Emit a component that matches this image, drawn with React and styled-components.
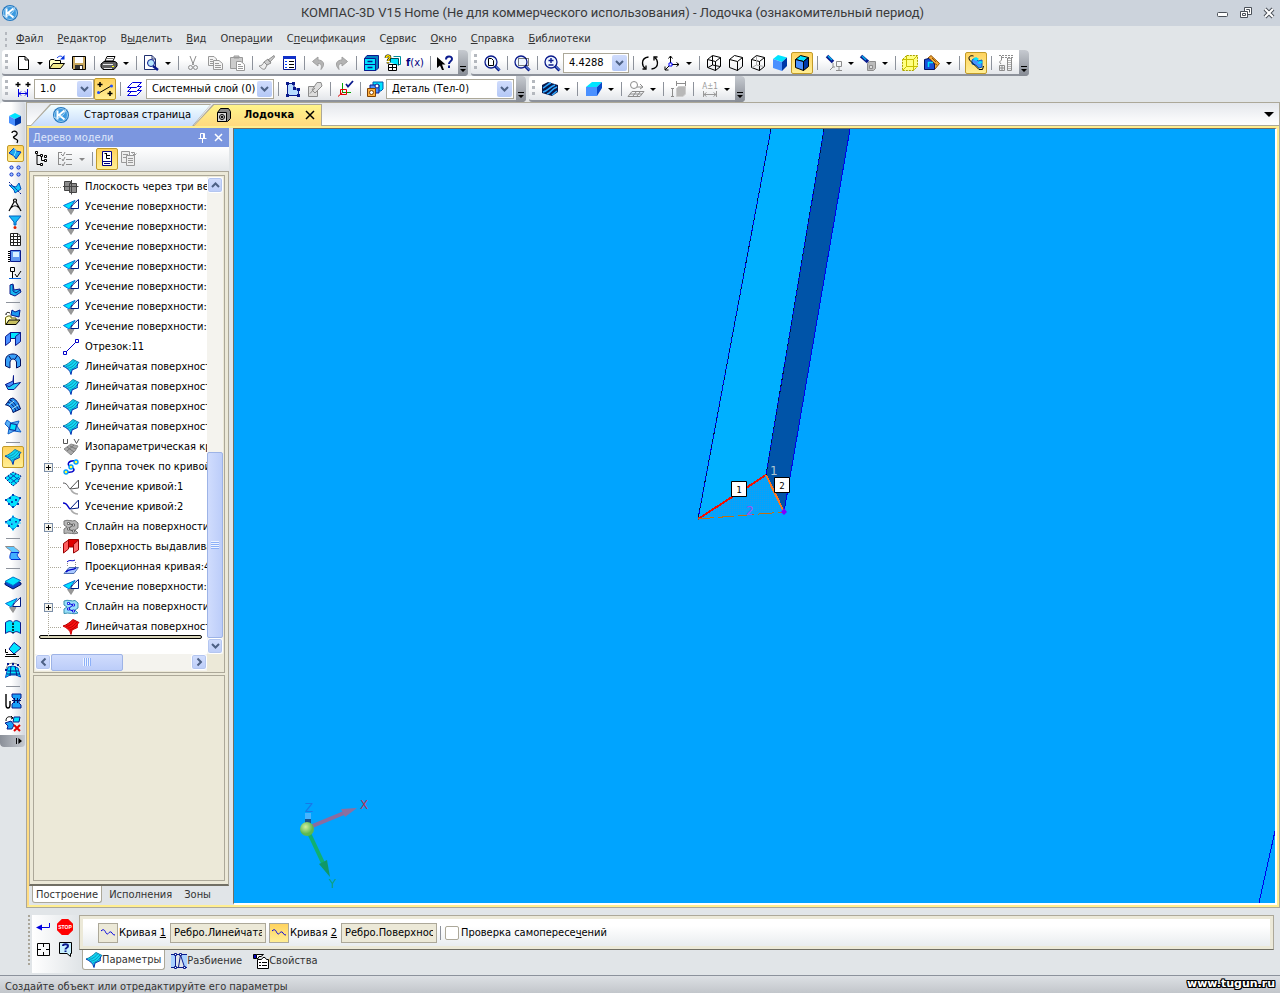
import React from 'react';
import styled, { createGlobalStyle, css } from 'styled-components';

const GlobalStyle = createGlobalStyle`
  * {
    box-sizing: border-box;
  }

  body {
    margin: 0;
    background: #e1e5e8;
    color: #000;
    font-family: "DejaVu Sans Condensed", "DejaVu Sans", sans-serif;
    font-size: 11px;
    line-height: 14px;
  }

  button,
  input,
  select {
    font: inherit;
    color: inherit;
    margin: 0;
    padding: 0;
  }

  button {
    border: none;
    background: none;
  }
`;

/* ---------- icons ---------- */

const Svg = styled.svg`
  display: block;
  flex: none;
  overflow: visible;
`;

const N = '#0a1a8c';
const C = '#00e4ff';
const B = '#4a90ff';
const G = '#8c8c8c';

const cubeWire = (
  <path
    d="M1.5 4.5 9.5 6.5V15.5L1.5 12.5ZM1.5 4.5 6.5 .5 14.5 2.5 9.5 6.5M14.5 2.5V11.5L9.5 15.5"
    fill="none"
    stroke="#000"
  />
);

const magnifier = (
  <g>
    <path d="M11 11 15.5 15.5" stroke={N} strokeWidth="3" />
    <path d="M11.5 11 15.5 15" stroke="#7ab4ff" />
    <circle cx="7" cy="7" r="6" fill="#eef6ff" stroke={N} strokeWidth="1.3" />
  </g>
);

const ruled = (fill, rib, edge) => (
  <g>
    <path d="M0 7C4 6 7 3 10 .5L16 3.5C14 5 14 7 14.5 8.5L9 11 8 15.5C7 11 4 9 0 7Z" fill={fill} />
    <path d="M3 7.5C7 7 10 4 12 1.5M5 9C9 9 11 6 14 3M7 11C9 10 12 9 14 6" fill="none" stroke={rib} strokeWidth=".8" />
    <path d="M0 7C4 6 7 3 10 .5L16 3.5" fill="none" stroke={rib} />
    <path d="M16 3.5C14 5 14 7 14.5 8.5L9 11 8 15.5C7 11 4 9 0 7" fill="none" stroke={edge} />
  </g>
);

const trimmed = (
  <g>
    <path d="M4.5 10.5H11L8 15.5Z" fill="#999" stroke="#777" strokeWidth=".6" />
    <path d="M.5 6.5 12 1.5 6 10Z" fill={C} stroke="#0070d8" />
    <path d="M15.5 .5V9.5H7.5L9.5 6Z" fill="#fff" stroke="#001a80" />
  </g>
);

const splineSurface = (fill, stroke, line) => (
  <g>
    <path d="M1 2C5 0 9 3 12 1.5L15 4V9L12 11 15 14C11 16 6 13 1 14.5V10L4 8 1 6Z" fill={fill} stroke={stroke} />
    <path d="M5 4 10 6 5 10 10 12" fill="none" stroke={line} />
    <path d="M4.5 3.5h2v2h-2zM9.5 5h2v2h-2zM4.5 9h2v2h-2zM9.5 11h2v2h-2z" fill="#fff" stroke={line} strokeWidth=".8" />
  </g>
);

const patch = (
  <g>
    <path d="M0 7 8 1 16 5 13 11 8 15Z" fill={C} stroke={N} strokeDasharray="2 1" />
    <path d="M3 5 11 12M6 3 14 9M3 9 11 3M6 12 14 6" stroke="#0048b8" />
  </g>
);

const netPatch = (
  <g>
    <path d="M1 7 8 2 15 5 12 11 8 15Z" fill={C} stroke="#0a9cd8" />
    <path
      d="M0 6h2v2H0zM7 1h2v2H7zM14 4h2v2h-2zM4 4h2v2H4zM10 6h2v2h-2zM6 8h2v2H6zM7 13h2v2H7zM12 10h2v2h-2zM3 10h2v2H3z"
      fill="#0048b8"
    />
  </g>
);

const icons = {
  newFile: <path d="M3.5 1.5H10L13.5 5V14.5H3.5ZM10 1.5V5H13.5" fill="#fff" stroke="#000" />,
  open: (
    <g>
      <path d="M.5 13.5V5.5L2 4.5H5L6 5.5H11.5V8" fill="#ffffc0" stroke="#000" />
      <path d="M.5 13.5 4 8.5H15.5L11.5 13.5Z" fill="#f0e888" stroke="#000" />
      <path d="M8 3C10 .5 13 .5 14 3" fill="none" stroke="#0030e0" />
      <path d="M11 4.5H15.5V0Z" fill="#0030e0" />
    </g>
  ),
  save: (
    <g>
      <path d="M1.5 1.5H14.5V14.5H2.5L1.5 13.5Z" fill="#c8a860" stroke="#000" />
      <path d="M4 2H12V8H4Z" fill="#fff" />
      <path d="M4 10H12V14H4Z" fill="#333" />
      <path d="M9 11H11V14H9Z" fill="#fff" />
    </g>
  ),
  print: (
    <g>
      <path d="M4 6 6 1.5H14L12 6Z" fill="#fff" stroke="#000" />
      <path d="M6 3.5H12M5 5.5H11" stroke="#777" />
      <path d="M0 9 3 6.5H14L16 8V11L13 14.5H2L0 12Z" fill="#606060" stroke="#000" />
      <path d="M2 9.5H12M3 13.5H11" stroke="#e8e8e8" />
      <path d="M11 11.5H13" stroke="#ff0" />
    </g>
  ),
  preview: (
    <g>
      <path d="M1.5 .5H9L12.5 4V14.5H1.5ZM9 .5V4H12.5" fill="#fff" stroke="#203070" />
      <circle cx="8" cy="8" r="3.5" fill="#b8e8ff" stroke={N} />
      <path d="M10 11 15 15" stroke={N} strokeWidth="2.5" />
    </g>
  ),
  cut: (
    <g stroke={G} fill="none">
      <path d="M5 1 8.5 10M11 1 7.5 10" />
      <circle cx="5.5" cy="12.5" r="2" />
      <circle cx="10.5" cy="12.5" r="2" />
    </g>
  ),
  copy: (
    <g stroke="#999" fill="#f4f4f4">
      <path d="M1.5 1.5H7L9.5 4V10.5H1.5ZM3 4.5H6M3 6.5H7M3 8.5H7" />
      <path d="M6.5 5.5H12L15.5 8.5V14.5H6.5ZM8 8.5H12M8 10.5H14M8 12.5H14" />
    </g>
  ),
  paste: (
    <g stroke="#999" fill="#ccc">
      <path d="M1.5 2.5H13.5V13.5H1.5ZM5 3V1H10V3Z" />
      <path d="M7.5 6.5H12L15.5 9.5V15.5H7.5ZM9 9.5H12M9 11.5H14M9 13.5H14" fill="#fff" />
    </g>
  ),
  brush: (
    <g stroke={G} fill="#ccc">
      <path d="M15 .5 9 5 11 7 15.5 2ZM9 4 12 8 8 10 5 7Z" />
      <path d="M5 7 8 10 6 14C4 15 2 13 0 11C3 11 4 9 5 7Z" fill="#eee" />
    </g>
  ),
  props: (
    <g>
      <path d="M2.5 1.5H14.5V14.5H2.5Z" fill="#fff" stroke={N} />
      <path d="M2 1H15V4H2Z" fill="#1030c8" />
      <path d="M4 6.5H6M4 9.5H6M4 12.5H6" stroke="#0040ff" />
      <path d="M8 6.5H13M8 9.5H13M8 12.5H13" stroke="#000" />
    </g>
  ),
  undo: <path d="M1.5 6.5 7 2V5C12 5 15 9 10 14.5C11 10 10 8.5 7 8.5V11Z" fill="#b4b4b4" stroke="#a0a0a0" />,
  redo: <path d="M14.5 6.5 9 2V5C4 5 1 9 6 14.5C5 10 6 8.5 9 8.5V11Z" fill="#b4b4b4" stroke="#a0a0a0" />,
  cabinet: (
    <g stroke={N}>
      <path d="M1.5 3.5 4 .5H15.5V13L13 15.5H1.5Z" fill="#0080c0" />
      <path d="M1.5 3.5H12.5V9.5H1.5ZM1.5 9.5H12.5V15.5H1.5Z" fill={C} />
      <path d="M4.5 6.5H9.5M4.5 12.5H9.5" strokeWidth="1.6" />
    </g>
  ),
  library: (
    <g>
      <path d="M8.5 1.5H15.5V9.5H12" fill="#fff" stroke="#008c9c" />
      <path d="M5.5 7.5V3.5H13.5V10.5" fill={C} stroke="#00505c" />
      <path d="M3.5 9.5H11.5V15.5H3.5ZM3 12.5H12M7.5 10V15" fill="#fff" stroke="#000" />
      <path d="M1 3C1 0 5 0 5 2.5C5 4 3 4 3 6M3 7V8.5" stroke="#000" strokeWidth="2.6" fill="none" />
      <path d="M1 3C1 0 5 0 5 2.5C5 4 3 4 3 6M3 7V8" stroke="#ffe400" strokeWidth="1.4" fill="none" />
    </g>
  ),
  help: (
    <g>
      <path d="M0 2V13L3 10.5 5 15H7L5 9.5H8.5Z" fill="#000" />
      <path d="M9 4.5C9 .5 15 .5 15 4C15 6.5 12 6 12 9M12 10.5V13" stroke={N} strokeWidth="2" fill="none" />
    </g>
  ),
  zoomPage: (
    <g>
      {magnifier}
      <path d="M4.5 3.5H7.5L9.5 5.5V10.5H4.5Z" fill="#fff" stroke="#000" />
    </g>
  ),
  zoomFrame: (
    <g>
      {magnifier}
      <path d="M4.5 3.5H14.5V10.5H4.5Z" fill="none" stroke="#000" strokeDasharray="1 1" />
    </g>
  ),
  zoomScale: (
    <g>
      {magnifier}
      <path d="M7 3V8M4.5 5.5H9.5M4.5 10H9.5" stroke={N} strokeWidth="1.4" />
    </g>
  ),
  rotate: (
    <g fill="none" stroke="#000" strokeWidth="1.3">
      <path d="M6.5 2C2 2.5 .5 5 .5 8C.5 10 1 12 3.5 13.5M9.5 14C14 13.5 15.5 11 15.5 8C15.5 6 15 4 12.5 2.5" />
      <path d="M.5 14H4V10.5M15.5 2H12V5.5" />
    </g>
  ),
  axes: (
    <g fill="none" stroke="#000">
      <path d="M6.5 9V1M7 9.5H15M6 10 1 15M4.5 3.5 6.5 1 8.5 3.5M12.5 7.5 15 9.5 12.5 11.5M1 11.5V15H4.5" />
      <path d="M5 8H8V11H5Z" fill="#fff" stroke="#00f" />
    </g>
  ),
  wireAll: (
    <g>
      {cubeWire}
      <path d="M6.5 1V10L2 12.5M6.5 10 14 11.5" stroke="#000" fill="none" />
    </g>
  ),
  wire: cubeWire,
  wireThin: (
    <g>
      {cubeWire}
      <path d="M6.5 1V10L2 12.5M6.5 10 14 11.5" stroke="#aaa" fill="none" />
    </g>
  ),
  shaded: (
    <g>
      <path d="M1 4 6 0 15 2.5 10 7Z" fill={C} />
      <path d="M1 4 10 7V16L1 13Z" fill={B} />
      <path d="M10 7 15 2.5V11L10 16Z" fill="#0038a8" />
    </g>
  ),
  shadedEdges: (
    <g stroke="#000">
      <path d="M1.5 4.5 6.5 .5 14.5 2.5 9.5 6.5Z" fill={C} />
      <path d="M1.5 4.5 9.5 6.5V15.5L1.5 12.5Z" fill={B} />
      <path d="M9.5 6.5 14.5 2.5V11.5L9.5 15.5Z" fill="#0038a8" />
    </g>
  ),
  lampAxis: (
    <g>
      <path d="M1 1 7 7" stroke={N} strokeWidth="3.6" />
      <path d="M2 1 6 5" stroke="#00a8e8" strokeWidth="1.6" />
      <path d="M10.5 6.5H15.5V11.5H10.5ZM13 12V15M10 15.5H16M7 8V12L4 15M7 12H9" fill="none" stroke={G} />
    </g>
  ),
  lampCube: (
    <g>
      <path d="M1 1 8 7" stroke={N} strokeWidth="3.6" />
      <path d="M2 1 6 5" stroke="#00a8e8" strokeWidth="1.6" />
      <path d="M7.5 8.5 9.5 6.5H15.5V13.5L13.5 15.5H7.5Z" fill="#bbb" stroke={G} />
      <path d="M9.5 10.5H12.5V13.5H9.5Z" fill="#ddd" stroke={G} />
    </g>
  ),
  yellowBox: (
    <g>
      <path d="M.5 4.5 4.5 .5H15.5V11.5L11.5 15.5H.5Z" fill="#ffff80" stroke="#a8a000" strokeDasharray="2 1" />
      <path d="M.5 4.5H11.5V15.5M11.5 4.5 15.5 .5M4.5 .5V11.5H15.5M4.5 11.5 .5 15.5" fill="none" stroke="#c8c000" />
    </g>
  ),
  section: (
    <g>
      <path d="M4 3 7 .5 15.5 8.5 11 14H4Z" fill="#f0a838" stroke="#905000" />
      <path d="M8 3 12 7M7 6 13 10" stroke="#905000" />
      <path d="M.5 4.5 5 3.5 10.5 9V14.5H.5Z" fill="#1850d8" stroke="#001060" />
      <path d="M4.5 12V7.5H9" stroke={C} fill="none" strokeWidth="1.5" />
    </g>
  ),
  rebuild: (
    <g>
      <path d="M4 5 7 3 10 6 14 5V12L11 13 8 10 4 9Z" fill={B} stroke="#0060c8" />
      <path d="M5 4 8 2 11 4 8 6ZM9 8 12 6 15 7 12 9Z" fill={C} />
      <path d="M5.5 1C2 0 0 2 1.5 5L11 14.5H14.5L15.5 11" fill="none" stroke="#000" />
    </g>
  ),
  frame3d: (
    <g fill="none" stroke={G}>
      <path d="M1 .5H16M4 2.5H16" strokeDasharray="2 1" />
      <path d="M9.5 3V15.5H13.5V3" />
      <path d="M11.5 3V15" strokeWidth="3" strokeDasharray="1 1" stroke="#b4b4b4" />
      <path d="M3.5 1V5L1.5 7L3 9M1.5 10.5H6.5V15.5H1.5ZM4 10V15M1 13H7" />
    </g>
  ),
  step: (
    <g>
      <path d="M3 1V6M13 1V6M.5 3.5H5.5M10.5 3.5H15.5" stroke="#000" strokeWidth="1.4" />
      <path d="M3.5 8V16M12.5 8V16M4 12.5H12M6 10.5 4 12.5 6 14.5M10 10.5 12 12.5 10 14.5" stroke="#0000e0" fill="none" />
    </g>
  ),
  snap: (
    <g>
      <path d="M3 1V6M.5 3.5H5.5M13 10V15M10.5 12.5H15.5" stroke="#000" strokeWidth="1.5" />
      <path d="M2 12 14 5" stroke="#000" />
      <circle cx="1.5" cy="11.5" r="1.5" fill="#2050ff" />
      <circle cx="14.5" cy="5" r="1.5" fill="#2050ff" />
    </g>
  ),
  layers: (
    <g fill="#fff" stroke="#0000e0">
      <path d="M.5 14.5 5.5 9.5H14.5L9.5 14.5Z" />
      <path d="M.5 10.5 5.5 5.5H14.5L9.5 10.5Z" />
      <path d="M.5 6.5 5.5 1.5H14.5L9.5 6.5Z" />
    </g>
  ),
  sketch: (
    <g>
      <path d="M2.5 2.5H8.5L9.5 7.5 13.5 8.5V14.5H2.5Z" fill="#b8dcff" stroke={N} />
      <path d="M1 1h3v3H1zM7 1h3v3H7zM8 6h3v3H8zM12 7h3v3h-3zM12 13h3v3h-3zM1 13h3v3H1z" fill={N} />
    </g>
  ),
  fromFile: (
    <g stroke={G} fill="#ddd">
      <path d="M1.5 5.5H10.5V15.5H1.5Z" />
      <path d="M5 9 10 1.5H14L15 5 8 12ZM3 12.5 8 7" />
    </g>
  ),
  axisCheck: (
    <g fill="none">
      <path d="M5.5 2V11M5 11.5H14" stroke="#00a000" />
      <path d="M6 11 1 15.5" stroke="#e00000" />
      <path d="M3.5 8.5H9.5V13.5H3.5Z" stroke="#e00000" />
      <path d="M9 3 11 5.5 16 0" stroke={N} strokeWidth="1.8" />
    </g>
  ),
  bodies: (
    <g>
      <path d="M6 1H16V8L14 10H6Z" fill={C} stroke="#0058b0" />
      <path d="M3 4H12V12H3Z" fill={B} stroke={N} />
      <circle cx="10" cy="5" r="2" fill="#fff" stroke={N} />
      <path d="M.5 7.5H8.5V15.5H.5Z" fill="#ffb040" stroke="#804000" />
      <circle cx="4.5" cy="11.5" r="2" fill="#fff" stroke="#804000" />
    </g>
  ),
  hatch: (
    <g>
      <path d="M0 4 6 1 16 4V11L10 15 0 12Z" fill="#08184c" />
      <path d="M1 7C4 6 5 3 9 2M1 11C6 10 7 6 13 4M5 13C9 12 9 8 15 6M10 14 15 10" stroke="#2fa8ff" strokeWidth="1.5" fill="none" />
    </g>
  ),
  plane: (
    <g>
      <path d="M0 6 6 1H16L11 6Z" fill={C} />
      <path d="M0 6H11V15H0Z" fill={B} />
      <path d="M11 6 16 1V7L11 15Z" fill="#0848c8" />
    </g>
  ),
  planeGrid: (
    <g fill="none" stroke={G}>
      <circle cx="6" cy="4" r="3.5" />
      <path d="M9 6H14M0 15.5 4 10.5H16L12 15.5ZM2 13H14M5 15 8 11M9 15 12 11" />
      <path d="M12 3 15 6 12 8" />
    </g>
  ),
  dims: (
    <g fill="none" stroke={G}>
      <path d="M6 2.5H15M6.5 0V5M15.5 0V5M1 7.5H4M1 15.5H4M2.5 8V15" />
      <path d="M6.5 7.5 8.5 5.5H15.5V13L13 15.5H6.5Z" fill="#b8b8b8" stroke="#ccc" />
    </g>
  ),
  tolerance: (
    <path
      d="M1.5 0V6M14.5 0V6M2 3.5H14M4.5 1.5 2 3.5 4.5 5.5M11.5 1.5 14 3.5 11.5 5.5"
      fill="none"
      stroke="#999"
    />
  ),
  cubeMini: (
    <g>
      <path d="M2 4 8 1 14 4 8 7Z" fill={C} />
      <path d="M2 4 8 7V14L2 11Z" fill={B} />
      <path d="M8 7 14 4V11L8 14Z" fill="#0038a8" />
    </g>
  ),
  curve: <path d="M5 4C5 1 11 2 10 5C9 8 5 7 7 9C9 11 12 10 10 14" fill="none" stroke="#000" strokeWidth="1.3" />,
  surface: (
    <g>
      <path d="M2 7 7 2 9 5 14 6 9 13 7 10Z" fill="#1ca8f0" stroke="#0038c0" />
      <path d="M7 2 9 5 7 10" fill="none" stroke="#90e8ff" />
    </g>
  ),
  points: (
    <g fill="#a0c8ff" stroke="#1030c8">
      <circle cx="4.5" cy="4.5" r="1.6" />
      <circle cx="11.5" cy="4.5" r="1.6" />
      <circle cx="4.5" cy="11.5" r="1.6" />
      <circle cx="11.5" cy="11.5" r="1.6" />
    </g>
  ),
  auxPlane: (
    <g>
      <path d="M2 5 9 7 12 3 14 9 8 13 7 10Z" fill="#18c8f8" stroke="#0050c0" />
      <path d="M2 2 14 14" stroke={N} strokeDasharray="2 1" />
    </g>
  ),
  compass: (
    <g fill="none" stroke="#000" strokeWidth="1.2">
      <circle cx="8" cy="3.5" r="1.5" />
      <path d="M7 5 2 14M9 5 14 14M4 11C6 8 10 8 12 11" />
    </g>
  ),
  funnel: (
    <g>
      <path d="M2 2H14L9 8V11H7V8Z" fill="#18b8f8" stroke="#0060c0" />
      <circle cx="8" cy="13.5" r="1.5" fill="#e02000" />
    </g>
  ),
  spec: (
    <path
      d="M3.5 2.5H11L13.5 5V14.5H3.5ZM3.5 5.5H13.5M3.5 8.5H13.5M3.5 11.5H13.5M6.5 2.5V14.5M10.5 2.5V14.5"
      fill="#fff"
      stroke="#222"
    />
  ),
  report: (
    <g>
      <path d="M3.5 2.5H13.5V13.5H3.5Z" fill="#6098f0" stroke={N} />
      <path d="M6 4H12V9H6Z" fill="#d8f0ff" />
      <path d="M2 3V14" stroke="#000" strokeDasharray="1 1" strokeWidth="2" />
    </g>
  ),
  annot: (
    <g fill="none">
      <path d="M3.5 2.5H7.5V6.5H3.5ZM5.5 7V13" stroke="#000" />
      <path d="M2 13.5H14" stroke="#0060e0" />
      <path d="M8 9 10 12 14 6" stroke="#000" />
    </g>
  ),
  sheet: (
    <g>
      <path d="M3 3 6 2 7 8 13 7 14 10 8 14 3 12Z" fill="#18b8f0" stroke={N} />
      <path d="M6 3V9L9 11 13 8" fill="none" stroke={N} />
    </g>
  ),
  importSurf: (
    <g>
      <path d="M.5 15.5V8.5L3 7H6V9H11V15.5Z" fill="#ffffc0" stroke="#605800" />
      <path d="M1 15.5 4 11H15L11 15.5Z" fill="#c8c060" stroke="#000" />
      <path d="M6 6 7 1 10 3 15 1 14 8 10 7Z" fill="#1c98f0" stroke="#001a90" />
      <path d="M1 6C1 3 3 3 5 4" stroke="#000" fill="none" />
    </g>
  ),
  extrude: (
    <g stroke={N}>
      <path d="M5.5 1.5H15.5V7.5H5.5Z" fill={C} />
      <path d="M.5 5.5 5.5 1.5V10.5L.5 14.5Z" fill={B} />
      <path d="M10.5 5.5 15.5 1.5V10.5L10.5 14.5Z" fill={B} />
    </g>
  ),
  revolve: (
    <g stroke="#001060">
      <path d="M.5 13V7C1 2 5 1 8 1C12 1 15 4 15.5 7V13L11.5 15V9C10 5 6 5 5 9V15Z" fill="#38a0f8" />
      <path d="M4 3 6 6M12 3 10 6" />
    </g>
  ),
  kinematic: (
    <g>
      <path d="M.5 9.5 8 9 15.5 7.5 9 14.5H3Z" fill="#28d0f8" stroke={N} />
      <path d="M8.5 .5V9L4 12 .5 9.5 8 6Z" fill={B} stroke={N} />
    </g>
  ),
  loft: (
    <g>
      <path d="M.5 8 5 2 8 1C12 3 14 7 15.5 12L8 15.5C7 11 4 8 .5 8Z" fill="#2890f0" stroke="#001060" />
      <path d="M3 5C7 7 9 9 11 14M5 3C10 6 11 9 14 13" stroke="#001060" fill="none" />
      <path d="M4 8 9 4M7 12 13 8" stroke="#b0f0ff" fill="none" />
    </g>
  ),
  patchFill: (
    <g>
      <path d="M2 1 6 4 14 2 12 7 16 13 9 12 3 15 4 9 0 5Z" fill="#58b0f8" stroke="#1060c8" />
      <path d="M5.5 4.5 11.5 5.5 10.5 11.5 4.5 10.5Z" fill={C} stroke={N} />
    </g>
  ),
  ruled: ruled('#12d8f4', '#1080a8', '#0030b0'),
  ruledRed: ruled('#f81010', '#b00000', '#d00000'),
  patch,
  netPatch,
  netPatch2: (
    <g>
      {netPatch}
      <path d="M8 0V16M0 8H16" stroke="#20c8ff" />
    </g>
  ),
  joint: (
    <g>
      <path d="M.5 1.5H9C10 4 15 5 14 7.5H6C7 5 2 4 .5 1.5Z" fill="#60c8ff" stroke={G} />
      <path d="M6 7.5H14C10 10 14 13 15.5 14.5H6C4 13 5 10 6 7.5Z" fill="#40b0ff" stroke="#0030d0" />
    </g>
  ),
  offset: (
    <g>
      <path d="M0 8 8 4 16 8V9.5L8 14 0 9.5Z" fill="#0848d0" stroke="#001060" />
      <path d="M0 6.5 8 2 15.5 5.5 8 10.5Z" fill={C} stroke="#0078c8" />
    </g>
  ),
  trimmed,
  split: (
    <g>
      <path d="M.5 3.5C4 1 6 1 8 3.5C10 1 12 1 15.5 3.5V14.5C12 12 10 12 8 14.5C6 12 4 12 .5 14.5Z" fill={C} stroke={N} />
      <path d="M8 4V14" stroke="#000" strokeDasharray="2 1" strokeWidth="1.5" />
    </g>
  ),
  extend: (
    <g>
      <path d="M4 8 9 1.5 16 7 9 13Z" fill={C} stroke={N} />
      <path d="M.5 8V11.5H3M1 13.5H11M0 15.5H14" stroke="#000" fill="none" />
    </g>
  ),
  net: (
    <g>
      <path d="M3 4 8 3 13 5 15.5 14 11 12 5 12 .5 14.5Z" fill={C} stroke="#0048c0" />
      <path d="M3 8H14M2 11H15M6 3 5 13M10 3 12 13" stroke={N} fill="none" />
      <path d="M1 6 3 1 8 0 12 1 16 5" stroke={G} fill="none" />
      <path d="M2 0h2v2H2zM7 0h2v2H7zM12 1h2v2h-2zM0 6h2v2H0z" fill={N} />
    </g>
  ),
  sew: (
    <g>
      <path d="M1 1V12C1 16 5 16 5 12V8" fill="none" stroke="#000" strokeWidth="1.4" />
      <path d="M7 1H16V5L14 7V10L16 12V15H7V11L9 9V6L7 4Z" fill="#18a0f8" stroke={N} />
      <path d="M7 7.5H16M9.5 5V10M12.5 5V10" stroke="#001060" />
    </g>
  ),
  removeFace: (
    <g>
      <path d="M9 2H15L14 7H8Z" fill={C} stroke={N} />
      <path d="M0 8 6 6 9 10 7 14H2L3 11Z" fill="#18a0f8" stroke={N} />
      <path d="M1 6C1 1 5 1 8 3M6 1 8 3 6 4" fill="none" stroke="#000" />
      <path d="M9 10 15 16M15 10 9 16" stroke="#e00000" strokeWidth="2" />
    </g>
  ),
  planeThree: (
    <g stroke="#444">
      <path d="M1.5 2.5H7.5V11.5H1.5Z" fill={G} />
      <path d="M6.5 4.5H13.5V13.5H6.5Z" fill={G} />
      <path d="M0 7.5H15.5M8.5 1V15.5" />
    </g>
  ),
  segment: (
    <g>
      <path d="M2 14 14 2" stroke="#0000c8" />
      <path d="M.5 12.5H3.5V15.5H.5ZM12.5 .5H15.5V3.5H12.5Z" fill="#fff" stroke="#0000c8" />
    </g>
  ),
  iso: (
    <g>
      <path d="M1 10 8 5 15 7 12 12 8 16Z" fill="#a8a8a8" stroke={G} />
      <path d="M4 8 11 13M7 7 13 10M4 12 11 6" stroke="#777" />
      <path d="M.5 0V4.5H4.5V0M11 0 13.5 4.5 16 0" fill="none" stroke="#555" />
    </g>
  ),
  pointGroup: (
    <g>
      <path d="M13 2C5 1 3 6 8 8C13 10 12 14 3 13" fill="none" stroke="#0000c8" strokeWidth="1.5" />
      <g fill="#ffff40" stroke="#00a0ff" strokeWidth="1.4">
        <circle cx="13" cy="3" r="2" />
        <circle cx="8" cy="8" r="2" />
        <circle cx="3" cy="13" r="2" />
      </g>
    </g>
  ),
  trimCurveGrey: (
    <g fill="none">
      <path d="M0 4C5 4 5 9 7 10" stroke="#555" />
      <path d="M7 10 15.5 1V9L7 10" stroke="#555" />
      <path d="M8 11C10 14 12 15 15 15" stroke="#aaa" strokeWidth="1.5" />
    </g>
  ),
  trimCurve: (
    <g fill="none">
      <path d="M0 4C5 4 5 9 7 10" stroke="#0000c8" strokeWidth="1.4" />
      <path d="M7 10 15.5 1V9L7 10" stroke="#001a80" />
      <path d="M8 11C10 14 12 15 15 15" stroke="#aaa" strokeWidth="1.5" />
    </g>
  ),
  splineGrey: splineSurface('#b8b8b8', '#777', '#555'),
  spline: splineSurface('#98e0f8', '#3890b0', '#0000e0'),
  extrudeRed: (
    <g stroke="#900">
      <path d="M5.5 .5H15.5L11 8H5.5Z" fill="#e00000" />
      <path d="M.5 4.5 5.5 1V10L.5 14Z" fill="#ff6060" />
      <path d="M10.5 5.5 15.5 1V11L10.5 14Z" fill="#ff7070" />
    </g>
  ),
  projection: (
    <g>
      <path d="M1 14.5 6 8.5H15.5L11 14.5Z" fill="#a8c8ff" stroke="#5070b0" />
      <path d="M3 13C6 9 9 12 13 9" fill="none" stroke="#0000c8" strokeWidth="1.3" />
      <path d="M4 3C7 0 9 3 12 1" fill="none" stroke="#0000c8" />
      <path d="M4.5 4V8M12.5 3V8" stroke={G} strokeDasharray="1 1" />
    </g>
  ),
  treeView: (
    <g fill="none" stroke="#000">
      <path d="M2 3V13.5H6M2 4.5H6M6.5 6V9.5H9" />
      <path d="M.5 .5h2v2H.5zM5.5 3.5h2v2h-2zM9.5 8.5h2v2h-2zM5.5 12.5h2v2h-2zM9.5 4.5h2v2h-2z" fill="#fff" />
    </g>
  ),
  checkList: (
    <g fill="none" stroke={G}>
      <path d="M1.5 1V14M2 1.5H5M2 7.5H4M2 13.5H4M9 3.5H15M9 8.5H15M9 13.5H15" />
      <path d="M4 3 6 5 8 1M5 8 6 10 8 6M5 13 6 15 8 11" />
    </g>
  ),
  docTree: (
    <g>
      <path d="M3.5 .5H12.5V14.5H3.5Z" fill="#fff" stroke="#000080" />
      <path d="M4 10.5H12M5 12.5H11" stroke="#000080" />
      <path d="M5.5 2.5H8M7.5 2V7.5H11M8 4.5H11" stroke="#000" fill="none" />
    </g>
  ),
  docCopy: (
    <g fill="#eee" stroke="#999">
      <path d="M.5 .5H8.5V11.5H.5Z" />
      <path d="M5.5 4.5H13.5V14.5H5.5ZM7 7.5H12M7 9.5H12M7 11.5H12M2 3.5H7M2 6.5H5" />
      <path d="M10 1.5H13.5V4M11.5 2.5 13.5 4.5 15.5 2.5" fill="none" />
    </g>
  ),
  doc: (
    <g stroke="#000">
      <path d="M1.5 5.5 4.5 1.5H12.5L14.5 4.5V11.5L11.5 14.5H1.5Z" fill="#888" />
      <path d="M1.5 5.5H10.5V14.5H1.5Z" fill="#d8d8d8" />
      <circle cx="6" cy="10" r="2.5" fill="#fff" />
      <circle cx="6" cy="10" r="1" fill="#000" />
    </g>
  ),
  enter: (
    <g>
      <path d="M14.5 4V8.5H6" fill="none" stroke="#0000e0" />
      <path d="M1 8.5 7 5.5V11.5Z" fill="#0000e0" />
    </g>
  ),
  target: (
    <path
      d="M2.5 2.5H14.5V14.5H2.5ZM8.5 3V6M8.5 11V14M3 8.5H6M11 8.5H14"
      fill="none"
      stroke="#000"
    />
  ),
  ask: (
    <g>
      <path d="M2.5 1.5H14.5V12.5H13.5V15.5L10 12.5H2.5Z" fill="#c8f0ff" stroke="#000" />
      <path d="M6 5C6 2.5 11 2.5 11 5C11 7 8.5 6.5 8.5 8.5M8.5 9.5V11" stroke={N} strokeWidth="2" fill="none" />
    </g>
  ),
  wave: <path d="M1 6C4 3 5 6 6 8C8 11 9 6 11 7C13 8 12 10 15 10" fill="none" stroke="#0000e0" />,
  division: (
    <g stroke={N}>
      <path d="M0 1.5H4.5V14.5H0ZM9.5 1.5H16V14.5H13.5Z" fill="#a8d0ff" stroke="none" />
      <path d="M0 1.5H16M0 14.5H16M4.5 2V14M7.5 14 9.5 2 13.5 14" fill="none" />
      <path d="M3.5 .5h2v2h-2zM8.5 .5h2v2h-2zM3.5 13.5h2v2h-2zM12.5 13.5h2v2h-2z" fill="#fff" />
    </g>
  ),
  sheetHand: (
    <g stroke="#000">
      <path d="M4.5 6.5H8.5L10 4.5H12L13.5 6.5H15.5V15.5H4.5ZM6 9.5H8M9 9.5H14M6 12.5H8M9 12.5H14" fill="#fff" />
      <path d="M.5 1.5H3.5V5.5H.5Z" fill="#0000c0" />
      <path d="M3.5 1.5H10.5L8 3.5H6L5 5.5H3.5Z" fill="#fff" />
    </g>
  ),
};

function Icon({ name, height = 16 }) {
  return (
    <Svg width="16" height={height} viewBox={`0 0 16 ${height}`} aria-hidden="true">
      {icons[name]}
    </Svg>
  );
}

function Logo() {
  return (
    <Svg width="16" height="16" viewBox="0 0 16 16" aria-hidden="true">
      <circle cx="8" cy="8" r="8" fill="#2478c0" />
      <circle cx="8" cy="8" r="6.5" fill="#3c9ae0" stroke="#a8d4f4" strokeWidth=".8" />
      <path d="M4.5 3.5V12.5M11.5 3.5 6 8 11.5 12.5" fill="none" stroke="#fff" strokeWidth="2" />
      <path d="M1 10C4 13 12 9 13 2" fill="none" stroke="#d0e8fa" strokeWidth=".8" />
    </Svg>
  );
}

/* ---------- window chrome ---------- */

const Window = styled.div`
  display: flex;
  flex-direction: column;
  height: 100vh;
  overflow: hidden;
`;

const TitleBar = styled.header`
  display: flex;
  align-items: center;
  height: 26px;
  padding: 0 5px 0 2px;
  background: #ccd3dc;
`;

const Title = styled.h1`
  flex: 1;
  margin: 0;
  padding-right: 10px;
  color: #3a3a3a;
  font: 13px/18px Roboto, "Open Sans", sans-serif;
  text-align: center;
  white-space: nowrap;
`;

const WindowButtons = styled.div`
  display: flex;
  gap: 11px;
`;

const Grip = styled.span`
  flex: none;
  width: 3px;
  height: 18px;
  background: repeating-linear-gradient(to bottom, #b4b8be 0 3px, transparent 3px 6px);
`;

const MenuBar = styled.nav`
  display: flex;
  align-items: center;
  gap: 14px;
  height: 24px;
  padding-top: 2px;
  padding-left: 5px;

  ${Grip} {
    width: 2px;
    height: 15px;
    margin-right: -5px;
  }
`;

const MenuItem = styled.button`
  color: #333;
  white-space: nowrap;
`;

const ToolRow = styled.div`
  display: flex;
  gap: 3px;
  height: 26px;
  padding: 0 2px;
`;

const ToolBar = styled.div`
  display: flex;
  align-items: center;
  height: 26px;
  padding-top: 2px;
  border-bottom: 2px solid #8d929b;
  border-radius: 3px 4px 4px 3px;
  background: linear-gradient(#fff 40%, #e3e6ea);

  ${Grip} {
    margin: 0 4px 0 3px;
  }
`;

const ToolButton = styled.button`
  display: flex;
  flex: none;
  flex-direction: column;
  align-items: center;
  justify-content: center;
  width: ${(p) => p.$size || 22}px;
  height: ${(p) => p.$size || 22}px;
  ${(p) =>
    p.$active &&
    css`
      border: 1px solid #c29b29;
      border-radius: 2px;
      background: linear-gradient(#ffd35e, #ffee94);
    `}
`;

const Caret = styled.button`
  display: flex;
  flex: none;
  align-items: center;
  justify-content: center;
  width: 12px;
  height: 22px;

  &::before {
    content: "";
    border: 3px solid transparent;
    border-top-color: ${(p) => (p.$muted ? '#888' : '#000')};
    border-bottom: 0;
  }
`;

const Separator = styled.span`
  flex: none;
  width: 1px;
  height: 14px;
  margin: 0 ${(p) => (p.$wide ? '5px 0 4px' : '3px 0 4px')};
  background: #8d929b;
`;

const BarCap = styled.span`
  display: flex;
  flex: none;
  align-items: flex-end;
  justify-content: center;
  align-self: stretch;
  width: 10px;
  margin: -2px 0 -2px 2px;
  padding-bottom: 4px;
  border-radius: 0 4px 4px 0;
  background: linear-gradient(#c6cad0, #868b94);

  &::before {
    content: "";
    width: 6px;
    height: 6px;
    background: #000;
    clip-path: polygon(0 0, 100% 0, 100% 16%, 0 16%, 0 50%, 100% 50%, 50% 100%, 0 50%);
  }
`;

const FxLabel = styled.span`
  color: #000080;
`;

const ToleranceLabel = styled.span`
  color: #999;
  font-size: 8px;
  line-height: 9px;
`;

const ComboBox = styled.label`
  display: flex;
  flex: none;
  align-items: center;
  width: ${(p) => p.$width}px;
  height: 20px;
  padding: 1px;
  border: 1px solid #aca899;
  background: #fff;
`;

const ComboSelect = styled.select`
  flex: 1;
  min-width: 0;
  height: 16px;
  padding: 0 0 0 4px;
  appearance: none;
  border: none;
  outline: none;
  background: transparent;
`;

const ComboArrow = styled.span`
  display: flex;
  flex: none;
  align-items: center;
  justify-content: center;
  width: 15px;
  height: 16px;
  border-radius: 2px;
  background: linear-gradient(#d0dcfc, #b4c8f6);
  pointer-events: none;
`;

function Chevron() {
  return (
    <svg width="9" height="6" viewBox="0 0 9 6" aria-hidden="true">
      <path d="M1 1 4.5 4.5 8 1" fill="none" stroke="#4d6185" strokeWidth="2" />
    </svg>
  );
}

function Combo({ width, value, label }) {
  return (
    <ComboBox $width={width}>
      <ComboSelect aria-label={label} defaultValue={value}>
        <option>{value}</option>
      </ComboSelect>
      <ComboArrow><Chevron /></ComboArrow>
    </ComboBox>
  );
}

/* A tool is an icon name; '|' and '||' are separators, 'v' a drop-down arrow, '*' marks a pressed button. */
function Tools({ items }) {
  return items.map((item, i) => {
    if (typeof item !== 'string') return <React.Fragment key={i}>{item}</React.Fragment>;
    if (item === '|') return <Separator key={i} />;
    if (item === '||') return <Separator key={i} $wide />;
    if (item === 'v' || item === 'vm') return <Caret key={i} $muted={item === 'vm'} aria-label="Ещё" />;
    const name = item.replace('*', '');
    return (
      <ToolButton key={i} $active={item.endsWith('*')} aria-label={name}>
        <Icon name={name} />
      </ToolButton>
    );
  });
}

const standardTools = [
  'newFile', 'v', 'open', 'save', '|', 'print', 'v', '|', 'preview', 'v', '|', 'cut', 'copy', 'paste', '|',
  'brush', 'props', '|', 'undo', 'redo', '|', 'cabinet', 'library',
  <ToolButton><FxLabel><b>f</b>(x)</FxLabel></ToolButton>, '|', 'help',
];

const viewTools = [
  'zoomPage', '|', 'zoomFrame', '|', 'zoomScale', <Combo width={66} value="4.4288" label="Масштаб" />, '||',
  'rotate', 'axes', 'v', '|', 'wireAll', 'wire', 'wireThin', 'shaded', 'shadedEdges*', '||', 'lampAxis', 'v',
  'lampCube', 'v', '|', 'yellowBox', 'section', 'v', '||', 'rebuild*', '|', 'frame3d',
];

const stateTools = [
  'step', <Combo width={60} value="1.0" label="Шаг курсора" />, 'snap*', '|', 'layers',
  <Combo width={128} value="Системный слой (0)" label="Слой" />, '|', 'sketch', 'fromFile', '|', 'axisCheck', '|',
  'bodies', <Combo width={128} value="Деталь (Тел-0)" label="Деталь" />,
];

const displayTools = [
  'hatch', 'v', '||', 'plane', 'v', '|', 'planeGrid', 'v', '|', 'dims', '||',
  <ToolButton>
    <ToleranceLabel>A±1</ToleranceLabel>
    <Icon name="tolerance" height={6} />
  </ToolButton>, 'v',
];

/* ---------- left palette ---------- */

const Main = styled.div`
  display: flex;
  flex: 1;
  min-height: 0;
`;

const PaletteColumn = styled.aside`
  flex: none;
  width: 26px;
`;

const Palette = styled.div`
  display: flex;
  flex-direction: column;
  width: 25px;
  padding-top: 9px;
  border-radius: 3px;
  background: linear-gradient(to right, #fff 45%, #d3d7de);
`;

const PaletteGroup = styled.div`
  display: flex;
  flex-direction: column;
  align-items: center;
  padding-left: ${(p) => (p.$compact ? 5 : 1)}px;

  & + & {
    margin-top: 4px;
    padding-top: 4px;
    background: linear-gradient(#8d929b, #8d929b) 6px 0 / 14px 1px no-repeat;
  }
`;

const PaletteCap = styled.span`
  display: flex;
  align-items: center;
  justify-content: flex-end;
  height: 12px;
  margin-top: 1px;
  padding-right: 3px;
  border-radius: 0 0 4px 4px;
  background: linear-gradient(to right, #8a8f98, #c6cad0);

  &::before {
    content: "";
    width: 6px;
    height: 6px;
    background: #000;
    clip-path: polygon(0 0, 16% 0, 16% 100%, 0 100%, 0 0, 40% 0, 100% 50%, 40% 100%, 40% 0);
  }
`;

const paletteSwitches = [
  'cubeMini', 'curve', 'surface*', 'points', 'auxPlane', 'compass', 'funnel', 'spec', 'report', 'annot', 'sheet',
];

const paletteGroups = [
  ['importSurf', 'extrude', 'revolve', 'kinematic', 'loft', 'patchFill'],
  ['ruled*', 'patch', 'netPatch', 'netPatch2'],
  ['joint'],
  ['offset', 'trimmed', 'split', 'extend', 'net'],
  ['sew', 'removeFace'],
];

/* ---------- document frame ---------- */

const DocFrame = styled.div`
  display: flex;
  flex: 1;
  flex-direction: column;
  min-width: 0;
  border: 1px solid #aca899;
`;

const TabStrip = styled.div`
  display: flex;
  height: 23px;
  padding-left: 3px;
  border-bottom: 1px solid #aca899;
  background: linear-gradient(#e4e7ec, #fff);
`;

const TabButton = styled.button`
  display: flex;
  position: relative;
  align-items: center;
  gap: ${(p) => (p.$active ? 12 : 15)}px;
  height: 22px;
  margin-top: 1px;
  margin-left: ${(p) => (p.$active ? -18 : 0)}px;
  padding: ${(p) => (p.$active ? '0 8px 0 23px' : '0 20px 0 23px')};
  font-weight: ${(p) => (p.$active ? 'bold' : 'normal')};
  white-space: nowrap;
  isolation: isolate;

  &::before,
  &::after {
    content: "";
    position: absolute;
    inset: 0;
    z-index: -1;
    background: #aca899;
    clip-path: polygon(
      20px 0,
      100% 0,
      ${(p) => (p.$active ? '100%' : 'calc(100% - 18px)')} 100%,
      0 100%
    );
  }

  &::after {
    inset: 1px 1px 0 1px;
    background: ${(p) => (p.$active ? 'linear-gradient(#fff48a, #ffd980)' : 'linear-gradient(#f2feff, #c8dcfb)')};
  }
`;

const TabMenu = styled.button`
  margin-left: auto;
  padding-right: 5px;

  &::before {
    content: "";
    display: block;
    border: 5px solid transparent;
    border-top-color: #000;
    border-bottom: 0;
  }
`;

const DocBody = styled.div`
  display: flex;
  flex: 1;
  min-height: 0;
  border: 2px solid #ffee90;
  border-left-color: #ffdc82;
`;

const TreePanel = styled.section`
  display: flex;
  flex: none;
  flex-direction: column;
  width: 200px;
`;

const TreeHeader = styled.div`
  display: flex;
  align-items: center;
  gap: 7px;
  height: 19px;
  padding: 0 6px 0 4px;
  background: #7b96df;
  color: #dfe6fa;
`;

const TreeTitle = styled.h2`
  flex: 1;
  margin: 0;
  font: inherit;
`;

const TreeTools = styled.div`
  display: flex;
  align-items: center;
  height: 24px;
  padding-left: 3px;
  background: linear-gradient(#fff, #e4e7ea);
`;

const TreeWell = styled.div`
  display: flex;
  flex: 1;
  flex-direction: column;
  gap: 2px;
  min-height: 0;
  padding: 3px;
  border: 1px solid #aca899;
  border-bottom: 2px solid #716f64;
  background: #ece9d8;
`;

const TreeBox = styled.div`
  display: grid;
  flex: 500;
  grid-template-columns: minmax(0, 1fr) 16px;
  grid-template-rows: minmax(0, 1fr) 17px;
  min-height: 0;
  padding: 1px;
  border: 1px solid #aca899;
`;

const DetailBox = styled.div`
  flex: 207;
  border: 1px solid #aca899;
`;

const TreeList = styled.ul`
  margin: 0;
  padding: 0;
  overflow: hidden;
  background: #fff;
  list-style: none;
`;

const TreeRow = styled.li`
  display: flex;
  align-items: center;
  gap: 6px;
  height: 20px;
  padding-left: 8px;
  white-space: nowrap;

  /* vertical connector between the nodes */
  &::before {
    content: "";
    flex: none;
    align-self: stretch;
    width: 1px;
    margin: 0 -1px 0 5px;
    background: repeating-linear-gradient(#aca899 0 1px, transparent 1px 2px);
  }
`;

const Branch = styled.span`
  display: flex;
  flex: none;
  align-items: center;
  width: 13px;
  height: 1px;
  margin-right: -4px;
  margin-left: -6px;
  background: repeating-linear-gradient(to right, #aca899 0 1px, transparent 1px 2px);
`;

const Expander = styled.button`
  flex: none;
  width: 9px;
  height: 9px;
  margin-left: -4px;
  border: 1px solid #7b8ea8;
  background:
    linear-gradient(#000, #000) center / 5px 1px no-repeat,
    linear-gradient(#000, #000) center / 1px 5px no-repeat,
    #f4f2ea;
`;

const BuildMarker = styled.li`
  height: 4px;
  margin: -2px 5px 0 4px;
  border: 1px solid #000;
  border-radius: 2px;
  background: #d8d4b8;
`;

const ScrollTrack = styled.div`
  display: flex;
  flex-direction: ${(p) => (p.$horizontal ? 'row' : 'column')};
  background: #f4f3ee;
`;

const ScrollButton = styled.button`
  display: flex;
  flex: none;
  align-items: center;
  justify-content: center;
  width: 16px;
  height: 16px;
  border: 1px solid #fff;
  border-radius: 3px;
  background: linear-gradient(#d2defd, #bccdf8);
  box-shadow: inset 0 0 0 1px #b4c6f0;

  svg {
    transform: rotate(${(p) => p.$turn}deg);
  }
`;

const ScrollSpace = styled.div`
  flex: ${(p) => p.$grow};
`;

const ScrollThumb = styled.div`
  display: flex;
  flex: ${(p) => p.$grow};
  align-items: center;
  justify-content: center;
  border: 1px solid #9db3e6;
  border-radius: 2px;
  background: linear-gradient(${(p) => (p.$horizontal ? '' : 'to right, ')}#d0dcfd, #bccdf9);

  &::before {
    content: "";
    width: 8px;
    height: 8px;
    background: repeating-linear-gradient(
      ${(p) => (p.$horizontal ? 'to right, ' : '')}#eef4fe 0 1px,
      #8cb0f8 1px 2px
    );
  }
`;

const PanelTabs = styled.div`
  display: flex;
  height: 19px;
  padding: 0 3px;
  gap: 2px;
`;

const PanelTab = styled.button`
  display: flex;
  align-items: center;
  height: ${(p) => p.$height || 17}px;
  padding: ${(p) => (p.$active ? '1px 3px 0' : '1px 5px 0')};
  color: #333;
  white-space: nowrap;
  ${(p) =>
    p.$active &&
    css`
      border: 1px solid #aca899;
      border-top: none;
      border-radius: 0 0 3px 3px;
      background: #fff;
    `}
`;

const Canvas = styled.div`
  display: flex;
  flex: 1;
  min-width: 0;
  margin-left: 4px;
  border: 1px solid #716f64;
  border-right: 2px solid #fff;
  border-bottom: 2px solid #fff;
  background: #00a4ff;
`;

const Scene = styled.svg`
  flex: 1;
  min-width: 0;
  height: 100%;
`;

const treeItems = [
  ['planeThree', 'Плоскость через три вершины:1'],
  ...Array.from({ length: 7 }, (_, i) => ['trimmed', `Усечение поверхности:${i + 1}`]),
  ['segment', 'Отрезок:11'],
  ...Array.from({ length: 4 }, (_, i) => ['ruled', `Линейчатая поверхность:${i + 1}`]),
  ['iso', 'Изопараметрическая кривая:1'],
  ['pointGroup', 'Группа точек по кривой:1', true],
  ['trimCurveGrey', 'Усечение кривой:1'],
  ['trimCurve', 'Усечение кривой:2'],
  ['splineGrey', 'Сплайн на поверхности:1', true],
  ['extrudeRed', 'Поверхность выдавливания:1'],
  ['projection', 'Проекционная кривая:4'],
  ['trimmed', 'Усечение поверхности:8'],
  ['spline', 'Сплайн на поверхности:2', true],
  ['ruledRed', 'Линейчатая поверхность:5'],
];

function ScrollArrow({ turn, label }) {
  return (
    <ScrollButton $turn={turn} aria-label={label}>
      <Chevron />
    </ScrollButton>
  );
}

function ModelTree() {
  return (
    <TreePanel>
      <TreeHeader>
        <TreeTitle>Дерево модели</TreeTitle>
        <button aria-label="Закрепить">
          <Svg width="9" height="10" viewBox="0 0 9 10">
            <path d="M2.5 5.5V.5H6.5V5.5M5.5 1V5M.5 5.5H8.5M4.5 6V10" stroke="#fff" fill="none" />
          </Svg>
        </button>
        <button aria-label="Закрыть">
          <Svg width="9" height="9" viewBox="0 0 9 9">
            <path d="M1 1 8 8M8 1 1 8" stroke="#fff" strokeWidth="1.5" />
          </Svg>
        </button>
      </TreeHeader>
      <TreeTools>
        <Tools items={['treeView', 'checkList', 'vm', '|', 'docTree*', 'docCopy']} />
      </TreeTools>
      <TreeWell>
        <TreeBox>
          <TreeList>
            {treeItems.map(([icon, text, folded], i) => (
              <TreeRow key={i}>
                <Branch>{folded && <Expander aria-label="Развернуть" />}</Branch>
                <Icon name={icon} />
                {text}
              </TreeRow>
            ))}
            <BuildMarker />
          </TreeList>
          <ScrollTrack>
            <ScrollArrow turn={180} label="Вверх" />
            <ScrollSpace $grow={260} />
            <ScrollThumb $grow={184} />
            <ScrollArrow turn={0} label="Вниз" />
          </ScrollTrack>
          <ScrollTrack $horizontal>
            <ScrollArrow turn={90} label="Влево" />
            <ScrollThumb $horizontal $grow={70} />
            <ScrollSpace $grow={68} />
            <ScrollArrow turn={-90} label="Вправо" />
          </ScrollTrack>
        </TreeBox>
        <DetailBox />
      </TreeWell>
      <PanelTabs>
        <PanelTab $active>Построение</PanelTab>
        <PanelTab>Исполнения</PanelTab>
        <PanelTab>Зоны</PanelTab>
      </PanelTabs>
    </TreePanel>
  );
}

function Viewport() {
  return (
    <Canvas>
      <Scene viewBox="234 129 1041 774" preserveAspectRatio="none">
        <defs>
          <pattern id="mesh" width="2" height="2" patternUnits="userSpaceOnUse">
            <rect width="2" height="2" fill="#00a4ff" />
            <rect width="1" height="1" fill="#209ce8" />
          </pattern>
          <radialGradient id="ball" cx=".4" cy=".35">
            <stop offset="0" stopColor="#d4f0a0" />
            <stop offset="1" stopColor="#5cb850" />
          </radialGradient>
        </defs>
        <path d="M771 129H824L766 475 698 519Z" fill="#00b0ff" />
        <path d="M824 129H850L784 512 766 475Z" fill="#0054a8" />
        <path d="M766 475 698 519 784 512Z" fill="url(#mesh)" />
        <g fill="none" shapeRendering="crispEdges">
          <path d="M771 129 698 519M824 129 766 475M850 129 784 512M1275 831 1259 903" stroke="#0000e8" />
          <path d="M771 129 698 519M824 129 766 475" stroke="#001040" strokeDasharray="3 4" />
          <path d="M698 519 766 475" stroke="#f01000" strokeWidth="2" />
          <path d="M766 475 784 512" stroke="#ff7820" strokeWidth="2" />
          <path d="M698 519 784 512" stroke="#c07010" strokeDasharray="16 4" />
        </g>
        <path d="M784 508 787 512 784 515 781 512Z" fill="#8000ff" />
        <g fontFamily="DejaVu Sans, sans-serif" fontSize="12">
          <text x="770" y="475" fill="#b0c8d0">1</text>
          <text x="746" y="515" fill="#a050f0">2</text>
        </g>
        <path
          d="M731.5 481.5H746.5V496.5H731.5ZM774.5 477.5H789.5V492.5H774.5Z"
          fill="#fff"
          stroke="#000"
        />
        <g fontFamily="DejaVu Sans Mono, monospace" fontSize="9" textAnchor="middle">
          <text x="739" y="493">1</text>
          <text x="782" y="489">2</text>
        </g>
        <path d="M305 813H311V826H305Z" fill="#1c5088" />
        <path d="M305 813H311V819H305Z" fill="#48b4ff" />
        <path d="M310 827 344 813" stroke="#8a6ca0" strokeWidth="4" />
        <path d="M341 809 357 808 345 817Z" fill="#8c70a0" />
        <path d="M309 833 323 863" stroke="#10b070" strokeWidth="4" />
        <path d="M319 864 327 860 330 877Z" fill="#109868" />
        <circle cx="307" cy="829" r="7" fill="url(#ball)" />
        <g fontFamily="DejaVu Sans, sans-serif" fontSize="12">
          <text x="305" y="812" fill="#1878e8">Z</text>
          <text x="360" y="809" fill="#b03860">X</text>
          <text x="329" y="888" fill="#10a080">Y</text>
        </g>
      </Scene>
    </Canvas>
  );
}

/* ---------- property panel and status ---------- */

const PropertyPanel = styled.section`
  display: flex;
  height: 67px;
  padding: 7px 6px 0 28px;
`;

const PropertyGrip = styled.span`
  width: 2px;
  height: 52px;
  margin-right: 2px;
  background: repeating-linear-gradient(#aaa69a 0 2px, transparent 2px 4px);
`;

const Commands = styled.div`
  display: grid;
  grid-template-columns: 22px 22px;
  align-content: start;
  width: 47px;
  height: 58px;
  padding-top: 1px;
  background: linear-gradient(to right, #fff, #e1e5e8);
`;

const StopIcon = styled.span`
  display: flex;
  align-items: center;
  justify-content: center;
  width: 16px;
  height: 16px;
  background: #ff0000;
  clip-path: polygon(30% 0, 70% 0, 100% 30%, 100% 70%, 70% 100%, 30% 100%, 0 70%, 0 30%);
  color: #fff;
  font: bold 5px/8px "Liberation Sans", sans-serif;
`;

const PropertyArea = styled.div`
  flex: 1;
  min-width: 0;
`;

const PropertyRow = styled.div`
  display: flex;
  align-items: center;
  height: 35px;
  padding-left: 18px;
  border: 1px solid #aca899;
  border-bottom-color: #716f64;
  background: linear-gradient(#fff 30%, #e6eaed);
  box-shadow: inset 0 0 0 3px #ece9d8;

  ${Separator} {
    margin: 0 4px 0 0;
  }
`;

const CurveButton = styled.button`
  display: flex;
  flex: none;
  align-items: center;
  justify-content: center;
  width: 20px;
  height: 20px;
  border: 1px solid #aca899;
  background: ${(p) => (p.$active ? 'linear-gradient(#ffd35e, #ffee94)' : '#ece9d8')};
`;

const FieldLabel = styled.label`
  flex: none;
  width: 52px;
  padding-left: 1px;
  white-space: nowrap;
`;

const FieldInput = styled.input`
  width: 96px;
  height: 20px;
  margin-right: 3px;
  padding: 0 3px;
  border: 1px solid #aca899;
  background: #ece9d8;
`;

const CheckBox = styled.input`
  flex: none;
  width: 14px;
  height: 14px;
  margin: 0 2px 0 0;
  appearance: none;
  border: 1px solid #aca899;
  border-radius: 2px;
  background: #fff;
`;

const PropertyTabs = styled.div`
  display: flex;
  padding-left: 3px;
  gap: 1px;
`;

const StatusBar = styled.footer`
  display: flex;
  align-items: center;
  justify-content: space-between;
  height: 18px;
  padding: 4px 5px 0;
  border-top: 1px solid #8c929c;
  background: linear-gradient(#dde0e4, #c2c6cb);
  color: #333;
`;

const Watermark = styled.a`
  margin-top: -5px;
  color: #fff;
  font: bold 11px/14px "DejaVu Sans", sans-serif;
  text-decoration: none;
  text-shadow: 1px 0 #000, -1px 0 #000, 0 1px #000, 0 -1px #000, 1px 1px #000, -1px -1px #000, 1px -1px #000,
    -1px 1px #000;
`;

const menus = [
  ['', 'Ф', 'айл'],
  ['', 'Р', 'едактор'],
  ['В', 'ы', 'делить'],
  ['', 'В', 'ид'],
  ['Опера', 'ц', 'ии'],
  ['С', 'п', 'ецификация'],
  ['С', 'е', 'рвис'],
  ['', 'О', 'кно'],
  ['', 'С', 'правка'],
  ['', 'Б', 'иблиотеки'],
];

function App() {
  return (
    <Window>
      <GlobalStyle />
      <TitleBar>
        <Logo />
        <Title>КОМПАС-3D V15 Home (Не для коммерческого использования) - Лодочка (ознакомительный период)</Title>
        <WindowButtons>
          <button aria-label="Свернуть">
            <Svg width="12" height="12" viewBox="0 0 12 12">
              <rect x=".5" y="5.5" width="10" height="4" rx="1" fill="#fff" stroke="#4a5058" />
            </Svg>
          </button>
          <button aria-label="Восстановить">
            <Svg width="12" height="12" viewBox="0 0 12 12">
              <path d="M4.5 4V.5H11.5V7.5H8" fill="#fff" stroke="#4a5058" />
              <path d="M6.5 3V2.5H9.5V5.5" fill="none" stroke="#4a5058" />
              <path d="M.5 4.5H7.5V10.5H.5ZM2.5 6.5H5.5V8.5H2.5Z" fill="#fff" stroke="#4a5058" />
            </Svg>
          </button>
          <button aria-label="Закрыть">
            <Svg width="12" height="12" viewBox="0 0 12 12">
              <path d="M2 2 10 10M10 2 2 10" stroke="#4a5058" strokeWidth="4" />
              <path d="M2 2 10 10M10 2 2 10" stroke="#fff" strokeWidth="2" />
            </Svg>
          </button>
        </WindowButtons>
      </TitleBar>
      <MenuBar>
        <Grip />
        {menus.map(([before, key, after]) => (
          <MenuItem key={before + key + after}>
            {before}<u>{key}</u>{after}
          </MenuItem>
        ))}
      </MenuBar>
      <ToolRow>
        <ToolBar><Grip /><Tools items={standardTools} /><BarCap /></ToolBar>
        <ToolBar><Grip /><Tools items={viewTools} /><BarCap /></ToolBar>
      </ToolRow>
      <ToolRow>
        <ToolBar><Grip /><Tools items={stateTools} /><BarCap /></ToolBar>
        <ToolBar><Grip /><Tools items={displayTools} /><BarCap /></ToolBar>
      </ToolRow>
      <Main>
        <PaletteColumn>
          <Palette>
            <PaletteGroup $compact>
              {paletteSwitches.map((item) => (
                <ToolButton key={item} $size={17} $active={item.endsWith('*')} aria-label={item.replace('*', '')}>
                  <Icon name={item.replace('*', '')} />
                </ToolButton>
              ))}
            </PaletteGroup>
            {paletteGroups.map((group) => (
              <PaletteGroup key={group[0]}>
                <Tools items={group} />
              </PaletteGroup>
            ))}
            <PaletteCap />
          </Palette>
        </PaletteColumn>
        <DocFrame>
          <TabStrip>
            <TabButton><Logo />Стартовая страница</TabButton>
            <TabButton $active>
              <Icon name="doc" />Лодочка
              <Svg width="8" height="8" viewBox="0 0 8 8">
                <path d="M0 0 8 8M8 0 0 8" stroke="#000" strokeWidth="1.5" />
              </Svg>
            </TabButton>
            <TabMenu aria-label="Список вкладок" />
          </TabStrip>
          <DocBody>
            <ModelTree />
            <Viewport />
          </DocBody>
        </DocFrame>
      </Main>
      <PropertyPanel>
        <PropertyGrip />
        <Commands>
          <ToolButton aria-label="Создать объект"><Icon name="enter" /></ToolButton>
          <ToolButton aria-label="Прервать команду"><StopIcon>STOP</StopIcon></ToolButton>
          <ToolButton aria-label="Автосоздание"><Icon name="target" /></ToolButton>
          <ToolButton aria-label="Справка"><Icon name="ask" /></ToolButton>
        </Commands>
        <PropertyArea>
          <PropertyRow>
            <CurveButton aria-label="Выбрать кривую 1"><Icon name="wave" /></CurveButton>
            <FieldLabel htmlFor="curve1">Кривая <u>1</u></FieldLabel>
            <FieldInput id="curve1" defaultValue="Ребро.Линейчатая" />
            <CurveButton $active aria-label="Выбрать кривую 2"><Icon name="wave" /></CurveButton>
            <FieldLabel htmlFor="curve2">Кривая <u>2</u></FieldLabel>
            <FieldInput id="curve2" defaultValue="Ребро.Поверхность" />
            <Separator />
            <CheckBox type="checkbox" id="selfcross" />
            <label htmlFor="selfcross">Проверка самопересе<u>ч</u>ений</label>
          </PropertyRow>
          <PropertyTabs>
            <PanelTab $active $height={20}><Icon name="ruled" />Параметры</PanelTab>
            <PanelTab $height={20}><Icon name="division" />Разбиение</PanelTab>
            <PanelTab $height={20}><Icon name="sheetHand" />Свойства</PanelTab>
          </PropertyTabs>
        </PropertyArea>
      </PropertyPanel>
      <StatusBar>
        <span>Создайте объект или отредактируйте его параметры</span>
        <Watermark href="#">www.tugun.ru</Watermark>
      </StatusBar>
    </Window>
  );
}

export default App;
